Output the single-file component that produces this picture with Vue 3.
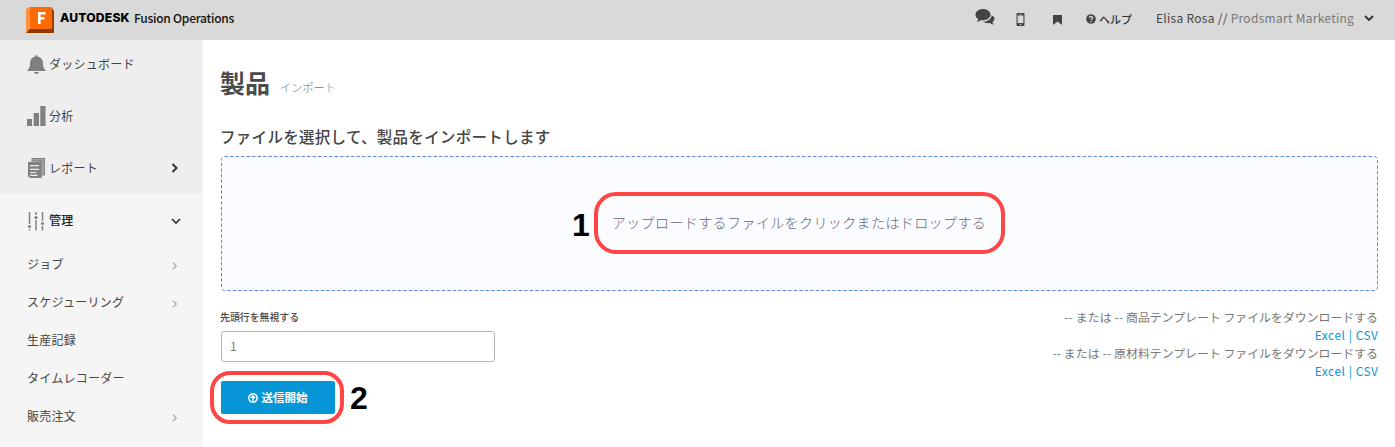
<script setup>
const subItems = [
  { label: 'ジョブ', arrow: true },
  { label: 'スケジューリング', arrow: true },
  { label: '生産記録', arrow: false },
  { label: 'タイムレコーダー', arrow: false },
  { label: '販売注文', arrow: true },
]
const templates = ['商品テンプレート ファイルをダウンロードする', '原材料テンプレート ファイルをダウンロードする']
</script>

<template>
  <div class="app">
    <header class="topbar">
      <svg class="logo" width="29" height="27" viewBox="0 0 29 27">
        <path d="M0 2 4 0v22L0 26z" fill="#ff9142" />
        <path d="M26 1l2 3v21q0 1-1 1L25 22z" fill="#993d00" />
        <path d="M0 26l4-4.500h22l2 2v1.500q0 1-1 1H2z" fill="#8f3900" />
        <path d="M4 0h21q1 0 1 1v20q0 1-1 1H4z" fill="#ff6b00" />
        <path d="M12 6.200h7.500M13.300 5v12M13.300 11.200h5.200" fill="none" stroke="#fff" stroke-width="2.600" />
      </svg>
      <div class="brand"><b>AUTODESK</b><span>Fusion Operations</span></div>
      <svg class="chat" width="20" height="17" viewBox="0 0 20 17" fill="#444">
        <path d="M19.500 9.500c0 1.500-.9 2.800-2.200 3.600.3.900.9 1.600 1.700 2.300-1.700.2-3.100-.4-4.200-1.300-2.700.3-5.200-.2-6.700-1.500 4.800-.1 8.300-2.500 8.500-6.400 1.800.8 2.900 1.800 2.900 3.300z" />
        <path d="M8 0c4.200 0 7.500 2.500 7.500 5.600s-3.300 5.600-7.500 5.600q-1 0-2-.2c-1.100 1-2.500 1.600-4.200 1.700.8-.8 1.300-1.500 1.500-2.500C1.500 9.200.5 7.500.5 5.600.5 2.500 3.800 0 8 0z" />
      </svg>
      <svg class="phone" width="9" height="13" viewBox="0 0 9 13">
        <path fill="#444" fill-rule="evenodd" d="M1.500 0h6Q8.500 0 8.500 1v11q0 1-1 1h-6q-1 0-1-1V1q0-1 1-1zM1.600 2.500v7.500h5.800V2.500zM3 1v.6h3V1zM4.500 10.800a.7.700 0 1 0 0 1.400.7.700 0 0 0 0-1.400z" />
      </svg>
      <svg class="mark" width="9" height="10" viewBox="0 0 9 10"><path d="M0 0h9v10L4.500 6.500 0 10z" fill="#444" /></svg>
      <svg class="question" width="10" height="10" viewBox="0 0 10 10">
        <circle cx="5" cy="5" r="4.800" fill="#444" />
        <path d="M3.300 3.900Q3.500 2.300 5 2.300T6.700 3.800Q6.700 4.600 5.700 5 5 5.300 5 6M5 7v1.300" fill="none" stroke="#ddd" stroke-width="1.300" />
      </svg>
      <span class="help">ヘルプ</span>
      <div class="user">Elisa Rosa // <span>Prodsmart Marketing</span></div>
      <svg class="user-arrow" width="10" height="7" viewBox="0 0 10 7"><path d="M1 1l4 4 4-4" fill="none" stroke="#333" stroke-width="1.900" /></svg>
    </header>

    <div class="body">
      <nav class="sidebar">
        <div class="main-nav">
          <div class="row">
            <svg width="19" height="20" viewBox="0 0 19 20" fill="#808080">
              <path d="M9.500 0q1.200 0 1.300 1.500C14.500 2.300 16 5 16 8.500c0 3.500.8 5 2.700 6.700V16H.3v-.8C2.200 13.500 3 12 3 8.500 3 5 4.500 2.300 8.200 1.500Q8.300 0 9.500 0zM7 17h5q-.4 2-2.500 2T7 17z" />
            </svg>
            <span>ダッシュボード</span>
          </div>
          <div class="row">
            <svg width="19" height="20" viewBox="0 0 19 20" fill="#808080"><path d="M0 13h5v7H0zM6.700 7h5.300v13H6.700zM13.300 0H18.500v20h-5.200z" /></svg>
            <span>分析</span>
          </div>
          <div class="row">
            <svg width="19" height="20" viewBox="0 0 19 20">
              <path d="M4.500 0H18v17.500h-3.500V4H4.500z" fill="#808080" />
              <path d="M2.500 3.400h12.800V18.500M4 1.700h12.800V18" fill="none" stroke="#c4c4c4" stroke-width=".6" />
              <path d="M1 4h13.700v16H3l-2-2z" fill="#808080" />
              <path d="M3 7.700h9M3 11.300h9M3 14.500h6.500M3 17.300h7.500" stroke="#eee" stroke-width="1.200" />
            </svg>
            <span>レポート</span>
            <svg class="arrow" width="8" height="10" viewBox="0 0 8 10"><path d="M1.500 1l4 4-4 4" fill="none" stroke="#333" stroke-width="2" /></svg>
          </div>
        </div>
        <div class="row open">
          <svg width="19" height="20" viewBox="0 0 19 20" stroke="#808080" fill="#808080">
            <path d="M2.500 1v12M2.500 18v1.500M9 1v3M9 9v10.500M15.500 1v9M15.500 15v4.500" stroke-width="1.500" fill="none" />
            <g stroke="none"><circle cx="2.500" cy="15.500" r="1.600" /><circle cx="9" cy="6.500" r="1.600" /><circle cx="15.500" cy="12.500" r="1.600" /></g>
          </svg>
          <span>管理</span>
          <svg class="arrow" width="10" height="7" viewBox="0 0 10 7"><path d="M1 1l4 4 4-4" fill="none" stroke="#333" stroke-width="1.700" /></svg>
        </div>
        <div v-for="item in subItems" :key="item.label" class="sub">
          <span>{{ item.label }}</span>
          <svg v-if="item.arrow" class="arrow" width="8" height="8" viewBox="0 0 8 8"><path d="M2 .8l3.200 3.200L2 7.200" fill="none" stroke="#b0b0b0" stroke-width="1.500" /></svg>
        </div>
      </nav>

      <main class="content">
        <div class="heading"><h1>製品</h1><small>インポート</small></div>
        <h2>ファイルを選択して、製品をインポートします</h2>
        <div class="drop">
          <svg class="dash" width="1157" height="135"><rect x=".5" y=".5" width="1156" height="134" rx="3" fill="#fbfcff" stroke="#5f8aec" stroke-dasharray="3.500 2" /></svg>
          <span class="drop-text">アップロードするファイルをクリックまたはドロップする</span>
          <div class="ring ring-one"></div>
          <b class="step step-one">1</b>
        </div>
        <div class="lower">
          <form class="form" @submit.prevent>
            <label>先頭行を無視する</label>
            <div class="field">1</div>
            <div class="submit-wrap">
              <button>
                <svg width="10" height="10" viewBox="0 0 10 10" fill="none" stroke="#fff" stroke-width="1.500"><circle cx="5" cy="5" r="4.200" /><path d="M5 8V3M2.800 5L5 2.800 7.200 5" /></svg>
                <span>送信開始</span>
              </button>
              <div class="ring ring-two"></div>
              <b class="step step-two">2</b>
            </div>
          </form>
          <div class="downloads">
            <template v-for="t in templates" :key="t">
              <p><span class="prefix">-- または -- </span>{{ t }}</p>
              <p class="links"><a>Excel</a> | <a>CSV</a></p>
            </template>
          </div>
        </div>
      </main>
    </div>
  </div>
</template>

<style>
body { margin: 0; overflow: hidden; }
</style>

<style scoped>
* { box-sizing: border-box; }
svg { display: block; flex: none; }
.app { width: 1395px; height: 447px; overflow: hidden; background: #fff; font-family: "Noto Sans CJK JP", sans-serif; color: #444; white-space: nowrap; }
.topbar { height: 40px; background: #d9d9d9; display: flex; align-items: center; padding-left: 26px; }
.logo { margin-right: 5px; }
.brand { width: 915px; font-size: 12px; line-height: 20px; color: #111; margin-top: -5px; display: flex; gap: 4px; }
.brand b { width: 70px; font-family: Inter, sans-serif; font-size: 12.200px; font-weight: 800; letter-spacing: .15px; color: #000; }
.brand span { font-weight: 500; letter-spacing: -.25px; }
.chat { margin-top: -6px; }
.phone { margin-left: 21px; margin-top: -1px; }
.mark { margin-left: 28px; margin-top: -1px; }
.question { margin-left: 24px; margin-top: -2px; }
.help { margin-left: 3px; width: 57px; font-size: 11px; font-weight: 500; line-height: 16px; margin-top: -3px; color: #333; }
.user { width: 206px; font-size: 12px; letter-spacing: .28px; line-height: 18px; margin-top: -4px; }
.user span { color: #777; }
.user-arrow { margin-top: -3px; margin-left: 2px; }
.body { display: flex; height: 407px; }
.sidebar { width: 203px; flex: none; background: #f5f5f5; }
.main-nav { background: #eee; height: 154px; }
.row { height: 52px; display: flex; align-items: center; padding-left: 27px; padding-right: 24px; gap: 3px; font-size: 12px; letter-spacing: .25px; }
.row:first-child { height: 50px; }
.row:first-child span { padding-bottom: 4px; }
.row span { padding-bottom: 2px; }
.arrow { margin-left: auto; }
.open { font-weight: 500; height: 53px; padding-right: 22px; color: #222; }
.open .arrow { margin-top: 2px; }
.sub { height: 38px; display: flex; align-items: center; padding-left: 27px; padding-right: 24px; font-size: 12px; letter-spacing: .25px; }
.sub span { padding-bottom: 5px; }
.sub .arrow { margin-top: -1px; }
.content { width: 1175px; flex: none; padding: 24px 0 0 18px; }
.heading { height: 36px; margin-left: -1px; display: flex; align-items: baseline; gap: 10px; line-height: 36px; }
h1, h2, p { margin: 0; }
h1 { font-size: 25px; font-weight: 700; color: #4a4a4a; }
small { font-size: 11.200px; font-weight: 300; color: #777; position: relative; top: -1px; }
h2 { margin: 24px 0 0 -1px; height: 32px; line-height: 24px; font-size: 15.500px; font-weight: 500; letter-spacing: .3px; color: #444; }
.drop { position: relative; width: 1157px; height: 135px; display: flex; align-items: center; justify-content: center; }
.dash { position: absolute; inset: 0; }
.drop-text { position: relative; font-size: 14px; letter-spacing: .4px; font-weight: 300; color: #667; padding: 0 1px 3px 0; }
.ring { position: absolute; border: 4px solid #ff4545; }
.ring-one { left: 373px; top: 36px; width: 411px; height: 62px; border-radius: 22px; }
.ring-two { left: -11px; top: -10px; width: 134px; height: 53px; border-radius: 20px; }
.step { position: absolute; font-family: "Liberation Sans", Arial, sans-serif; font-size: 32px; line-height: 32px; color: #000; }
.step-one { left: 351px; top: 53px; }
.step-two { left: 129px; top: 1px; }
.lower { width: 1157px; display: flex; justify-content: space-between; padding-top: 18px; }
label { display: block; margin-left: -1px; font-size: 9.900px; line-height: 16px; font-weight: 500; }
.field { width: 274px; height: 31px; margin-top: 6px; border: 1px solid #b4b6be; border-radius: 3px; padding-left: 8px; font-size: 12px; line-height: 27px; color: #777; }
.submit-wrap { position: relative; margin-top: 19px; }
button { width: 114px; height: 33px; border: 0; border-radius: 2px; background: #0696d7; color: #fff; display: flex; align-items: center; justify-content: center; gap: 4px; font-family: inherit; font-size: 11.500px; font-weight: 700; padding: 0 1px 0 0; }
button span { padding-bottom: 1px; }
.downloads { margin-top: -1px; font-size: 11.900px; line-height: 18px; text-align: right; color: #777; }
.prefix { letter-spacing: .15px; }
.links { color: #0696d7; letter-spacing: .55px; margin-right: -.5px; }
</style>
